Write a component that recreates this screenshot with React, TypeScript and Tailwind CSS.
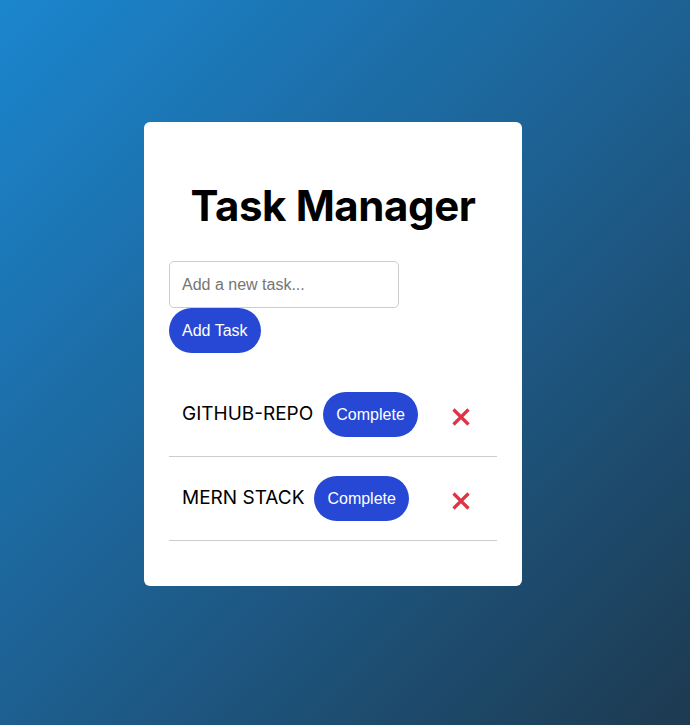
const tasks = ["GITHUB-REPO", "MERN STACK"];

function XIcon() {
  return (
    <svg viewBox="0 0 20 20" className="h-5 w-5" fill="none" stroke="#dc3545" strokeWidth="3.2" strokeLinecap="butt">
      <path d="M2.5 2.5 L17.5 17.5 M17.5 2.5 L2.5 17.5" />
    </svg>
  );
}

export default function App() {
  return (
    <div className="flex min-h-[725px] items-start justify-center bg-[linear-gradient(135deg,#1b86ce_0%,#1d6498_45%,#1d3a50_100%)] pr-6 pt-[122px]">
      <div className="w-[378px] rounded-md bg-white px-[25px] pb-[45px] pt-[56px]">
        <h1 className="text-center font-['Inter',sans-serif] text-[42px] font-bold leading-[56px] tracking-[-0.4px] text-black">
          Task Manager
        </h1>
        <div className="mt-[27px] flex flex-col items-start font-['Liberation_Sans',Arial,sans-serif]">
          <input
            type="text"
            placeholder="Add a new task..."
            className="h-[47px] w-[230px] rounded-[5px] border border-[#cccccc] px-3 text-base text-black outline-none placeholder:text-[#757575]"
          />
          <button className="h-[45px] rounded-full bg-[#2748d4] px-[13px] text-base text-white">
            Add Task
          </button>
        </div>
        <ul className="mt-[20px]">
          {tasks.map((t) => (
            <li
              key={t}
              className="flex h-[84px] items-center justify-between border-b border-[#cccccc] pl-[13px] pr-[26px]"
            >
              <div className="flex items-center gap-[10px]">
                <span className="font-['Inter',sans-serif] text-[19px] text-black">{t}</span>
                <button className="h-[45px] rounded-full bg-[#2748d4] px-[13px] font-['Liberation_Sans',Arial,sans-serif] text-base text-white">
                  Complete
                </button>
              </div>
              <button className="mt-1">
                <XIcon />
              </button>
            </li>
          ))}
        </ul>
      </div>
    </div>
  );
}
